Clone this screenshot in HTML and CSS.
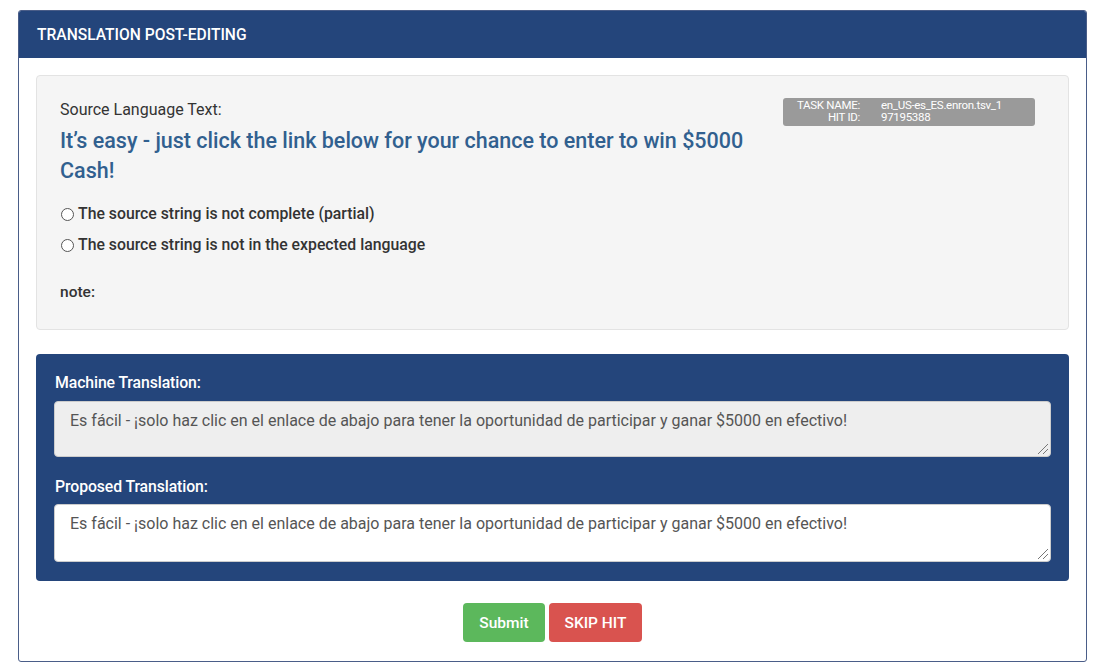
FILE: index.html
```html
<!DOCTYPE html>
<html>
<head>
<meta charset="utf-8">
<link rel="stylesheet" href="styles.css">
</head>
<body>
<div class="panel">
  <div class="panel-heading">TRANSLATION POST-EDITING</div>
  <div class="panel-body">
    <div class="well">
      <div class="source-col">
        <div class="src-label">Source Language Text:</div>
        <div class="src-text">It’s easy - just click the link below for your chance to enter to win $5000 Cash!</div>
        <label class="radio-row"><span class="radio"></span>The source string is not complete (partial)</label>
        <label class="radio-row"><span class="radio"></span>The source string is not in the expected language</label>
        <div class="note">note:</div>
      </div>
      <div class="meta-col">
        <div class="badge">
          <div class="badge-keys"><span>TASK NAME:</span><span>HIT ID:</span></div>
          <div class="badge-vals"><span>en_US-es_ES.enron.tsv_1</span><span>97195388</span></div>
        </div>
      </div>
    </div>
    <div class="blue-box">
      <div class="field-label">Machine Translation:</div>
      <div class="textarea readonly">Es fácil - ¡solo haz clic en el enlace de abajo para tener la oportunidad de participar y ganar $5000 en efectivo!<span class="grip"></span></div>
      <div class="field-label second">Proposed Translation:</div>
      <div class="textarea editable">Es fácil - ¡solo haz clic en el enlace de abajo para tener la oportunidad de participar y ganar $5000 en efectivo!<span class="grip"></span></div>
    </div>
    <div class="actions">
      <button class="btn btn-submit">Submit</button>
      <button class="btn btn-skip">SKIP HIT</button>
    </div>
  </div>
</div>
</body>
</html>
```

FILE: styles.css
```css
* { box-sizing: border-box; }
body {
  margin: 0;
  padding: 10px 13px 0 18px;
  background: #ffffff;
  font-family: Roboto, "Liberation Sans", sans-serif;
  color: #333;
}
.panel {
  width: 1069px;
  border: 1px solid #4a5d88;
  border-radius: 3px;
  background: #fff;
}
.panel-heading {
  height: 47px;
  background: #24457b;
  color: #fff;
  font-weight: 500;
  font-size: 15.6px;
  padding: 0 18px;
  display: flex;
  align-items: center;
  border-radius: 2px 2px 0 0;
}
.panel-body {
  padding: 17px 17px 19px 17px;
}
.well {
  background: #f5f5f5;
  border: 1px solid #e3e3e3;
  border-radius: 4px;
  height: 255px;
  padding: 23px 33px 0 23px;
  display: flex;
  justify-content: space-between;
}
.source-col { width: 715px; }
.src-label {
  font-size: 16px;
  line-height: 22px;
  color: #333;
}
.src-text {
  font-size: 21.5px;
  font-weight: 500;
  color: #31608f;
  line-height: 30px;
  margin-top: 5px;
}
.radio-row {
  display: flex;
  align-items: center;
  font-size: 15.8px;
  font-weight: 500;
  color: #333;
  line-height: 22px;
}
.src-text + .radio-row { margin-top: 17px; }
.radio-row + .radio-row { margin-top: 9px; }
.radio {
  width: 13px;
  height: 13px;
  border: 1px solid #555;
  border-radius: 50%;
  background: #fff;
  margin-right: 4px;
  margin-left: 1px;
}
.note {
  font-size: 15.5px;
  font-weight: 500;
  margin-top: 25px;
  line-height: 22px;
}
.badge {
  width: 252px;
  height: 28px;
  margin-top: -1px;
  background: #9a9a9a;
  border-radius: 3px;
  color: #fff;
  font-size: 11.5px;
  line-height: 12px;
  letter-spacing: -0.3px;
  display: flex;
  padding: 1px 0 0 0;
}
.badge-keys {
  width: 77px;
  display: flex;
  flex-direction: column;
  align-items: flex-end;
  text-align: right;
}
.badge-vals {
  padding-left: 21px;
  display: flex;
  flex-direction: column;
}
.blue-box {
  margin-top: 24px;
  background: #24457b;
  border-radius: 4px;
  padding: 19px 18px 19px 18px;
}
.field-label {
  color: #fff;
  font-size: 15.8px;
  font-weight: 500;
  line-height: 20px;
  padding-left: 1px;
  letter-spacing: -0.1px;
}
.field-label.second { margin-top: 20px; }
.textarea {
  position: relative;
  margin-top: 8px;
  border: 1px solid #ccc;
  border-radius: 4px;
  padding: 9px 15px;
  font-size: 16px;
  line-height: 20px;
  color: #555;
}
.textarea.readonly { background: #eeeeee; height: 56px; }
.textarea.editable { background: #fff; height: 58px; margin-top: 7px; }
.grip {
  position: absolute;
  right: 2px;
  bottom: 2px;
  width: 10px;
  height: 10px;
  background:
    linear-gradient(135deg, transparent 45%, #777 46%, #777 54%, transparent 55%) no-repeat,
    linear-gradient(135deg, transparent 45%, #777 46%, #777 54%, transparent 55%) no-repeat;
  background-size: 10px 10px, 5px 5px;
  background-position: 0 0, 5px 5px;
}
.actions {
  display: flex;
  justify-content: center;
  gap: 4px;
  margin-top: 22px;
}
.btn {
  height: 39px;
  border: none;
  border-radius: 4px;
  color: #fff;
  font-family: Roboto, "Liberation Sans", sans-serif;
  font-size: 15.5px;
  font-weight: 500;
  padding: 0;
}
.btn-submit { background: #5cb85c; width: 82px; }
.btn-skip { background: #d9534f; width: 93px; }
```
